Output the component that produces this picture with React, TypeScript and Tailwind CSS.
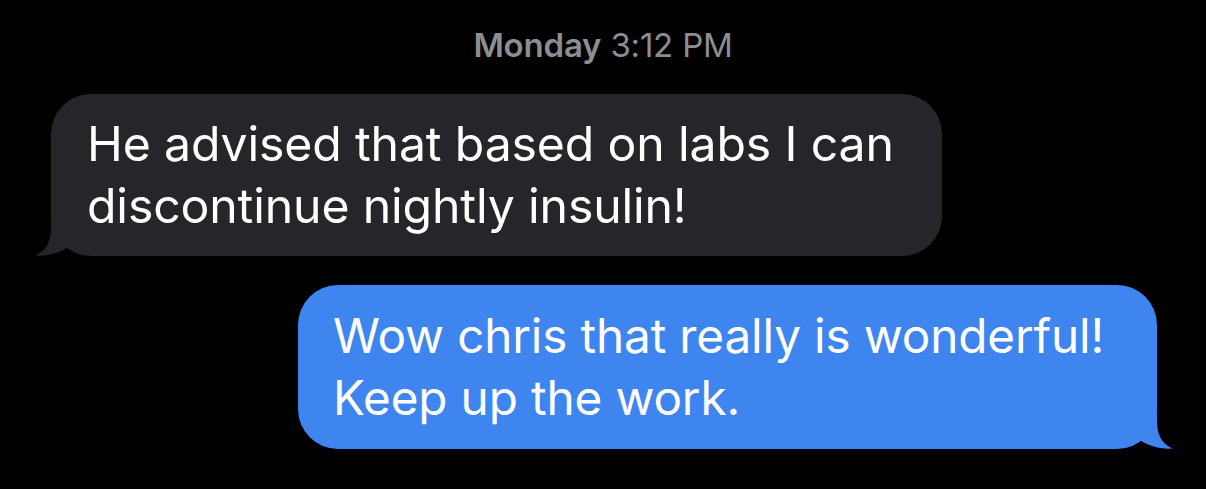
import React from "react";

const font = { fontFamily: "Inter, 'Liberation Sans', sans-serif" };

function Tail({ side, color }: { side: "left" | "right"; color: string }) {
  return (
    <svg
      width="40"
      height="38"
      viewBox="0 0 40 38"
      className={`absolute bottom-0 ${side === "left" ? "-left-4" : "-right-4 -scale-x-100"}`}
    >
      <path d="M16 0 L16 10 C16 25 10 34 0 37.5 C12 38.5 26 35 36 27 L40 0 Z" fill={color} />
    </svg>
  );
}

export default function App() {
  return (
    <div className="w-[1206px] h-[489px] bg-black overflow-hidden flex flex-col" style={font}>
      {/* timestamp */}
      <div className="mt-[25px] text-center text-[33px] leading-[40px] text-[#8d8d92] tracking-[-0.2px]">
        <span className="font-semibold">Monday</span> <span>3:12 PM</span>
      </div>

      {/* incoming */}
      <div className="mt-[29px] ml-[51px] relative w-[891px]">
        <div className="relative z-10 bg-[#262529] rounded-[40px] pl-[36px] pr-6 py-[19px] text-white text-[48.2px] leading-[62px] tracking-[-0.15px]">
          He advised that based on labs I can
          <br />
          discontinue nightly insulin!
        </div>
        <div className="absolute inset-0 z-10 pointer-events-none">
          <Tail side="left" color="#262529" />
        </div>
      </div>

      {/* outgoing */}
      <div className="mt-[29px] ml-[298px] relative w-[859px]">
        <div className="bg-[#3f85ef] rounded-[40px] pl-[35px] pr-6 py-[20px] text-white text-[47.7px] leading-[62px] tracking-[-0.15px]">
          Wow chris that really is wonderful!
          <br />
          Keep up the work.
        </div>
        <div className="absolute inset-0 pointer-events-none">
          <Tail side="right" color="#3f85ef" />
        </div>
      </div>
    </div>
  );
}
